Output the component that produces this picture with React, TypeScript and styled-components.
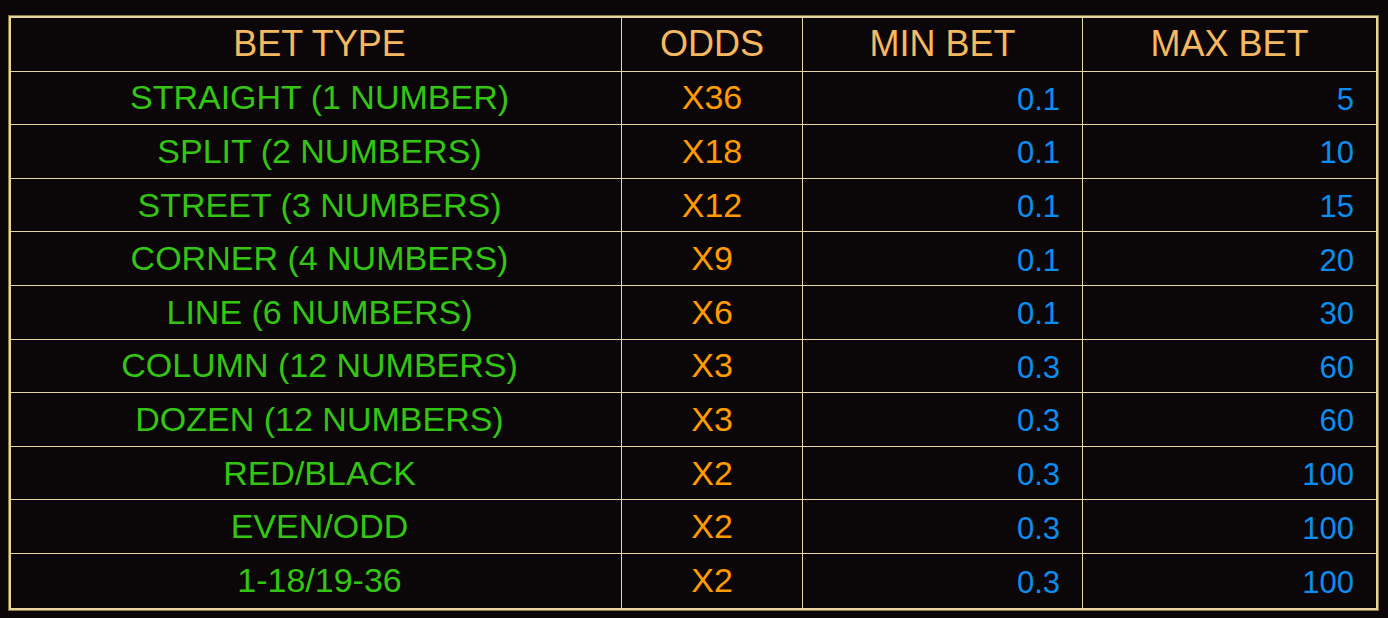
import styled, { createGlobalStyle } from 'styled-components';

const GlobalStyle = createGlobalStyle`
  html, body {
    margin: 0;
    padding: 0;
    background: #0b0608;
  }
`;

const Page = styled.div`
  padding: 16px 10px 8px 9px;
  background: #0b0608;
  min-height: 618px;
  box-sizing: border-box;
`;

const Table = styled.div`
  display: grid;
  grid-template-columns: 611px 181px 280px 1fr;
  grid-auto-rows: 53.6px;
  border: 2px solid #e4d5a2;
  box-shadow: 0 0 0 1px #8a7634;
  font-family: 'Liberation Sans', Arial, sans-serif;
  font-size: 34px;
`;

type CellProps = {
  $kind: 'head' | 'type' | 'odds' | 'amount';
  $last?: boolean;
  $bottom?: boolean;
};

const colors = {
  head: '#f6b95f',
  type: '#34c414',
  odds: '#ff9b00',
  amount: '#0a8ef0',
};

const Cell = styled.div<CellProps>`
  display: flex;
  align-items: center;
  justify-content: ${(p) => (p.$kind === 'amount' ? 'flex-end' : 'center')};
  padding: ${(p) => (p.$kind === 'amount' ? '4px 22px 0 0' : '0')};
  box-sizing: border-box;
  color: ${(p) => colors[p.$kind]};
  font-size: ${(p) => (p.$kind === 'head' ? '36px' : p.$kind === 'amount' ? '31px' : '34px')};
  border-right: ${(p) => (p.$last ? 'none' : '1px solid #e4d5a2')};
  border-bottom: ${(p) => (p.$bottom ? 'none' : '1px solid #e4d5a2')};
  white-space: nowrap;
`;

const TypeCell = styled(Cell)`
  padding-left: 7px;
`;

const rows = [
  ['STRAIGHT (1 NUMBER)', 'X36', '0.1', '5'],
  ['SPLIT (2 NUMBERS)', 'X18', '0.1', '10'],
  ['STREET (3 NUMBERS)', 'X12', '0.1', '15'],
  ['CORNER (4 NUMBERS)', 'X9', '0.1', '20'],
  ['LINE (6 NUMBERS)', 'X6', '0.1', '30'],
  ['COLUMN (12 NUMBERS)', 'X3', '0.3', '60'],
  ['DOZEN (12 NUMBERS)', 'X3', '0.3', '60'],
  ['RED/BLACK', 'X2', '0.3', '100'],
  ['EVEN/ODD', 'X2', '0.3', '100'],
  ['1-18/19-36', 'X2', '0.3', '100'],
];

const App = () => (
  <Page>
    <GlobalStyle />
    <Table>
      <TypeCell $kind="head">BET TYPE</TypeCell>
      <Cell $kind="head">ODDS</Cell>
      <Cell $kind="head">MIN BET</Cell>
      <Cell $kind="head" $last>MAX BET</Cell>
      {rows.map((r, i) => {
        const bottom = i === rows.length - 1;
        return [
          <TypeCell key={`${i}a`} $kind="type" $bottom={bottom}>{r[0]}</TypeCell>,
          <Cell key={`${i}b`} $kind="odds" $bottom={bottom}>{r[1]}</Cell>,
          <Cell key={`${i}c`} $kind="amount" $bottom={bottom}>{r[2]}</Cell>,
          <Cell key={`${i}d`} $kind="amount" $bottom={bottom} $last>{r[3]}</Cell>,
        ];
      })}
    </Table>
  </Page>
);

export default App;
